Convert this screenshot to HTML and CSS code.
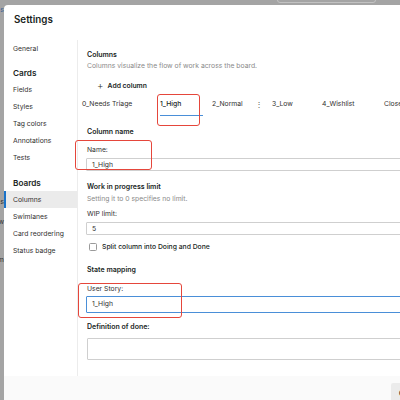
FILE: index.html
```html
<!DOCTYPE html>
<html>
<head>
<meta charset="utf-8">
<link rel="stylesheet" href="styles.css">
</head>
<body>
<div class="bg-search"></div>
<span class="bg-frag frag-1">s</span>
<span class="bg-frag frag-2">s</span>
<span class="bg-frag frag-3">w</span>
<span class="bg-frag frag-4">m</span>

<div class="dialog">
  <div class="dlg-head">Settings</div>
  <div class="dlg-body">
    <nav class="side">
      <div class="nav-item">General</div>
      <div class="nav-group">Cards</div>
      <div class="nav-item">Fields</div>
      <div class="nav-item">Styles</div>
      <div class="nav-item">Tag colors</div>
      <div class="nav-item">Annotations</div>
      <div class="nav-item">Tests</div>
      <div class="nav-group">Boards</div>
      <div class="nav-item selected">Columns</div>
      <div class="nav-item">Swimlanes</div>
      <div class="nav-item">Card reordering</div>
      <div class="nav-item">Status badge</div>
    </nav>
    <main class="panel">
      <div class="sec-title">Columns</div>
      <div class="desc">Columns visualize the flow of work across the board.</div>
      <div class="add"><span class="plus">+</span><span class="add-label">Add column</span></div>
      <div class="tabs">
        <div class="tab">0_Needs Triage</div>
        <div class="tab"><span class="tab-edit">1_High</span></div>
        <div class="tab tab-menu"><span class="tab-text">2_Normal</span><span class="kebab">&#8942;</span></div>
        <div class="tab">3_Low</div>
        <div class="tab">4_Wishlist</div>
        <div class="tab">Closed</div>
      </div>

      <div class="sec-title gap-colname">Column name</div>
      <div class="lbl gap-name">Name:</div>
      <div class="input">1_High</div>

      <div class="sec-title gap-wip">Work in progress limit</div>
      <div class="desc gap-wipdesc">Setting it to 0 specifies no limit.</div>
      <div class="lbl gap-wiplbl">WIP limit:</div>
      <div class="input">5</div>
      <div class="check-row"><span class="checkbox"></span><span class="check-label">Split column into Doing and Done</span></div>

      <div class="sec-title gap-state">State mapping</div>
      <div class="lbl gap-story">User Story:</div>
      <div class="input input-focus">1_High</div>

      <div class="sec-title gap-dod">Definition of done:</div>
      <div class="textarea"></div>
    </main>
  </div>
  <div class="dlg-foot"><button class="btn">Close</button></div>
</div>

<div class="mark mark-tab"></div>
<div class="mark mark-name"></div>
<div class="mark mark-story"></div>
</body>
</html>
```

FILE: styles.css
```css
* { box-sizing: border-box; }
html, body { margin: 0; }
body {
  width: 400px;
  height: 400px;
  overflow: hidden;
  position: relative;
  background: #a4a4a4;
  padding: 5px 0 0 4px;
  font-family: Inter, "Noto Sans", sans-serif;
  font-size: 6.8px;
  color: #323130;
}

/* page behind the overlay */
.bg-search {
  position: absolute;
  left: 277px;
  top: -6px;
  width: 99px;
  height: 9px;
  border: 1px solid #c2c2c2;
  border-radius: 3px;
}
.bg-frag {
  position: absolute;
  right: 396px;
  font-size: 7px;
  line-height: 8px;
  color: #333;
}
.frag-1 { top: 6px; color: #3d5f94; }
.frag-2 { top: 198px; }
.frag-3 { top: 218px; }
.frag-4 { top: 256px; }

/* dialog */
.dialog {
  width: 520px;
  height: 420px;
  background: #fff;
  border-radius: 4px 0 0 0;
  display: flex;
  flex-direction: column;
}
.dlg-head {
  height: 35px;
  padding: 10px 0 0 10px;
  font-size: 9.8px;
  line-height: 10px;
  font-weight: 600;
  color: #201f1e;
}
.dlg-body {
  height: 336px;
  display: flex;
}
.side {
  width: 73px;
  flex: none;
}
.nav-item {
  height: 17px;
  line-height: 17px;
  padding-left: 9px;
  white-space: nowrap;
}
.nav-item.selected {
  background: #ebebeb;
  box-shadow: inset 2px 0 0 #1a73c9;
}
.nav-group {
  height: 16px;
  line-height: 16px;
  margin-top: 8px;
  padding-left: 9px;
  font-size: 8.2px;
  font-weight: 600;
  color: #201f1e;
}
.nav-group + .nav-item { margin-top: 0; }
.side .nav-item:nth-child(8) { margin-top: 0; }
.side .nav-group:nth-child(8) { margin-top: 9px; }

.panel {
  flex: 1;
  border-left: 1px solid #ececec;
  padding: 10px 0 0 9px;
}
.sec-title {
  line-height: 10px;
  height: 10px;
  font-weight: 600;
  font-size: 7px;
  color: #201f1e;
  white-space: nowrap;
}
.desc {
  line-height: 10px;
  height: 10px;
  margin-top: 1px;
  color: #8a8a8a;
  white-space: nowrap;
}
.add {
  margin-top: 7px;
  height: 14px;
  padding-left: 10px;
  display: flex;
  align-items: center;
  gap: 4px;
}
.plus {
  font-size: 10px;
  font-weight: 300;
  line-height: 14px;
  color: #323130;
}
.add-label {
  font-weight: 600;
  color: #201f1e;
}

.tabs {
  margin-top: 3px;
  margin-left: -5px;
  display: grid;
  grid-template-columns: 78px 52px 60px 50px 62px auto;
  height: 22px;
}
.tab {
  padding-top: 4px;
  line-height: 10px;
  white-space: nowrap;
}
.tab-edit {
  display: block;
  width: 43px;
  padding-bottom: 6px;
  border-bottom: 1.2px solid #4a8fd8;
  font-weight: 500;
  color: #201f1e;
}
.tab-menu { display: flex; }
.tab-text { width: 43px; }
.kebab {
  font-size: 8px;
  line-height: 10px;
  color: #555;
}

.gap-colname { margin-top: 10px; }
.gap-name { margin-top: 8px; }
.gap-wip { margin-top: 11px; }
.gap-wipdesc { margin-top: 2px; }
.gap-wiplbl { margin-top: 5px; }
.gap-state { margin-top: 14px; }
.gap-story { margin-top: 9px; }
.gap-dod { margin-top: 9px; }

.lbl {
  line-height: 10px;
  height: 10px;
}
.input {
  margin-top: 3px;
  margin-left: -1px;
  height: 13px;
  border: 1px solid #cfcfcf;
  border-radius: 1px;
  padding-left: 5px;
  line-height: 11px;
}
.input-focus {
  margin-top: 2px;
  height: 17px;
  line-height: 14px;
  border: 1.5px solid #4a8fd8;
}
.check-row {
  margin-top: 8px;
  height: 8px;
  padding-left: 2px;
  display: flex;
  align-items: center;
  gap: 5px;
}
.checkbox {
  width: 8px;
  height: 8px;
  border: 1px solid #9a9a9a;
  border-radius: 1.5px;
  flex: none;
}
.check-label {
  line-height: 8px;
  font-weight: 500;
  color: #201f1e;
}
.textarea {
  margin-top: 6px;
  height: 22px;
  border: 1px solid #cfcfcf;
  border-radius: 1px;
}

.dlg-foot {
  flex: 1;
  background: #fafafa;
  padding: 7px 0 0 387px;
}
.btn {
  height: 20px;
  padding: 0 8px;
  border: none;
  border-radius: 2px;
  background: #ebebeb;
  font-family: Inter, "Noto Sans", sans-serif;
  font-size: 7px;
  font-weight: 600;
  color: #201f1e;
}

/* red annotation rectangles drawn over the page */
.mark {
  position: absolute;
  border: 1.5px solid #e5463b;
  border-radius: 3px;
}
.mark-tab { left: 157px; top: 94px; width: 43px; height: 32px; }
.mark-name { left: 75px; top: 140px; width: 77px; height: 30px; }
.mark-story { left: 78px; top: 283px; width: 104px; height: 35px; }
```
